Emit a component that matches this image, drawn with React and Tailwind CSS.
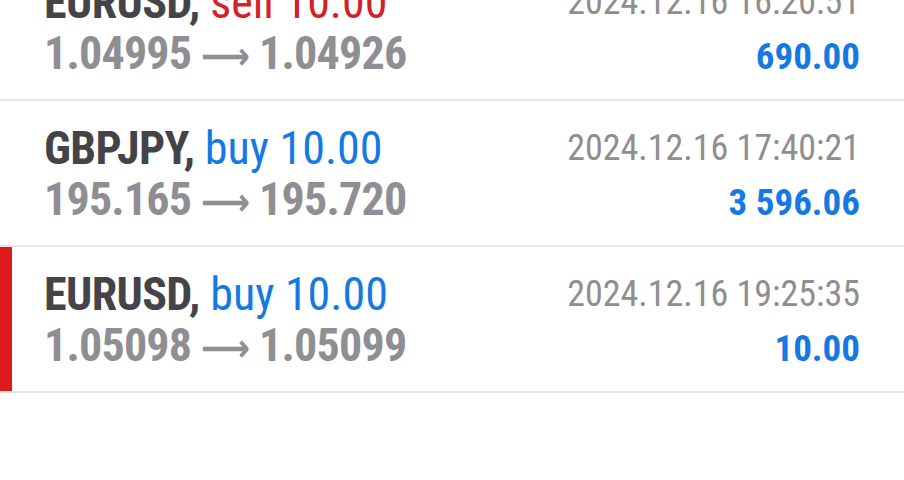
const deals = [
  {
    symbol: "EURUSD",
    side: "sell",
    volume: "10.00",
    open: "1.04995",
    close: "1.04926",
    time: "2024.12.16 16:20:51",
    profit: "690.00",
  },
  {
    symbol: "GBPJPY",
    side: "buy",
    volume: "10.00",
    open: "195.165",
    close: "195.720",
    time: "2024.12.16 17:40:21",
    profit: "3 596.06",
  },
  {
    symbol: "EURUSD",
    side: "buy",
    volume: "10.00",
    open: "1.05098",
    close: "1.05099",
    time: "2024.12.16 19:25:35",
    profit: "10.00",
    marked: true,
  },
];

export default function App() {
  return (
    <div
      className="h-[480px] w-[904px] overflow-hidden bg-white"
      style={{ fontFamily: "Roboto, 'Liberation Sans', sans-serif" }}
    >
      <div className="-mt-[45px] flex flex-col">
        {deals.map((deal, index) => (
          <DealRow key={index} deal={deal} />
        ))}
      </div>
    </div>
  );
}

function DealRow({ deal }) {
  const sideColor = deal.side === "sell" ? "text-[#d42026]" : "text-[#1479e2]";

  return (
    <div className="relative flex h-[146px] flex-col justify-center border-b-2 border-[#e6e6e6] px-[44px] pt-[4px] font-stretch-condensed">
      {deal.marked && (
        <div className="absolute bottom-0 left-0 top-0 w-3 bg-[#e0191e]"></div>
      )}
      <div className="flex justify-between leading-[51px]">
        <div className="text-[46px]">
          <span className="font-bold tracking-[-0.6px] text-[#434348]">{deal.symbol},</span>{" "}
          <span className={sideColor}>
            {deal.side} {deal.volume}
          </span>
        </div>
        <div className="text-[36px] text-[#8e8e90]">{deal.time}</div>
      </div>
      <div className="flex items-baseline justify-between leading-[51px]">
        <div className="text-[46px] font-bold tracking-[-0.8px] text-[#8e8e93]">
          {deal.open}{" "}
          <span className="text-[38px] [font-family:'DejaVu_Sans',sans-serif]">⟶</span>{" "}
          {deal.close}
        </div>
        <div className="text-[37px] font-bold text-[#1479e2]">{deal.profit}</div>
      </div>
    </div>
  );
}
